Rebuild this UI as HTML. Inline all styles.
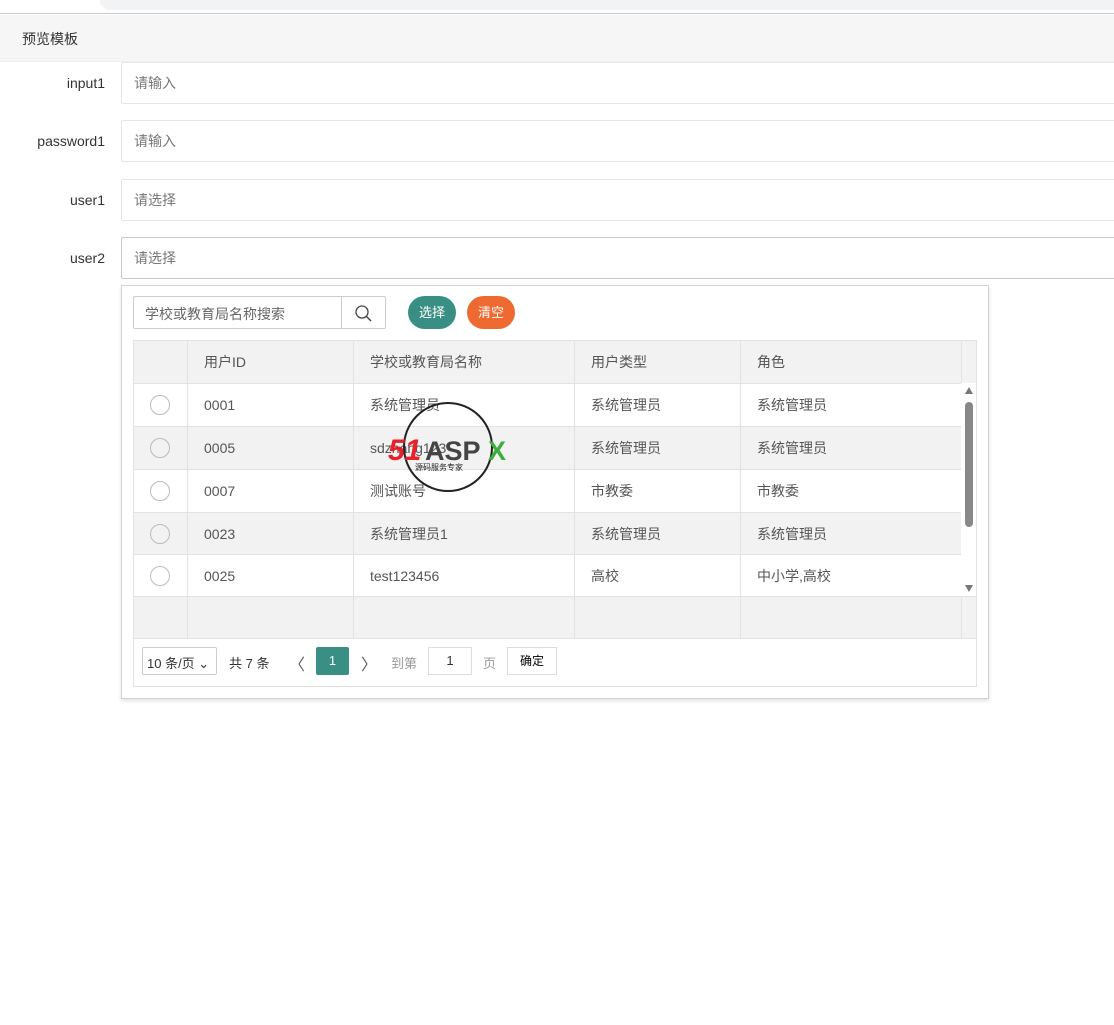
<!DOCTYPE html>
<html><head><meta charset="utf-8"><style>
*{box-sizing:border-box;margin:0;padding:0}
body{width:1114px;height:1025px;background:#fff;font-family:"Liberation Sans","Noto Sans CJK SC",sans-serif;font-size:14px;color:#333;position:relative;overflow:hidden}
.abs{position:absolute}
.chrome{left:0;top:0;width:1114px;height:14px;background:#fff;border-bottom:1px solid #ccc}
.addr{left:100px;top:-10px;width:1030px;height:20px;border-radius:10px;background:#f1f3f4}
.hdr{left:0;top:15px;width:1114px;height:47px;background:#f6f6f6;border-bottom:1px solid #eee;padding:14px 22px;font-size:14px;color:#333}
.lbl{width:105px;text-align:right;color:#333;font-size:14px}
.inp{left:121px;width:1000px;height:42px;border:1px solid #e6e6e6;border-radius:2px;padding:10px 12px;color:#777;font-size:14px}
.pop{left:121px;top:285px;width:868px;height:414px;border:1px solid #d2d2d2;box-shadow:0 2px 4px rgba(0,0,0,.12);background:#fff}
.srch{left:133px;top:296px;width:209px;height:33px;border:1px solid #ccc;border-radius:2px 0 0 2px;padding:7px 11px;color:#666}
.sbtn{left:341px;top:296px;width:45px;height:33px;border:1px solid #ccc;border-radius:0 2px 2px 0}
.btn{top:296px;height:33px;border-radius:17px;color:#fff;text-align:center;line-height:33px;font-size:13px}
table{position:absolute;left:133px;top:340px;border-collapse:collapse;width:844px}
td{border:1px solid #e2e2e2;height:42px;padding:0 16px;color:#555;font-size:14px}
tr.h td,tr.g td{background:#f2f2f2}
.rad{display:inline-block;width:20px;height:20px;border:1px solid #bbb;border-radius:50%;margin-left:0;vertical-align:middle}
.foot{left:133px;top:638px;width:844px;height:49px;border:1px solid #e2e2e2;border-top:none}
.sb{left:961px;top:383px;width:15px;height:213px;background:#fff}
</style></head><body>
<div class="abs chrome"></div><div class="abs addr"></div>
<div class="abs hdr">预览模板</div>
<div class="abs lbl" style="left:0;top:75px">input1</div>
<div class="abs inp" style="top:62px">请输入</div>
<div class="abs lbl" style="left:0;top:133px">password1</div>
<div class="abs inp" style="top:120px">请输入</div>
<div class="abs lbl" style="left:0;top:192px">user1</div>
<div class="abs inp" style="top:179px">请选择</div>
<div class="abs lbl" style="left:0;top:250px">user2</div>
<div class="abs inp" style="top:237px;border-color:#c9c9c9">请选择</div>
<div class="abs pop"></div>
<div class="abs srch">学校或教育局名称搜索</div>
<div class="abs sbtn"><svg width="45" height="33"><circle cx="20" cy="15" r="6" fill="none" stroke="#444" stroke-width="1.3"/><line x1="24.5" y1="19.5" x2="29" y2="24" stroke="#444" stroke-width="1.5"/></svg></div>
<div class="abs btn" style="left:408px;width:48px;background:#3a8f85">选择</div>
<div class="abs btn" style="left:467px;width:48px;background:#ee6a30">清空</div>
<table>
<tr class="h"><td style="width:54px;height:43px"></td><td style="width:166px">用户ID</td><td style="width:221px">学校或教育局名称</td><td style="width:166px">用户类型</td><td style="width:221px">角色</td><td style="width:15px;padding:0"></td></tr>
<tr><td style="height:43px"><span class="rad"></span></td><td>0001</td><td>系统管理员</td><td>系统管理员</td><td>系统管理员</td><td style="padding:0"></td></tr>
<tr class="g"><td style="height:43px"><span class="rad"></span></td><td>0005</td><td>sdzhang123</td><td>系统管理员</td><td>系统管理员</td><td style="padding:0"></td></tr>
<tr><td style="height:43px"><span class="rad"></span></td><td>0007</td><td>测试账号</td><td>市教委</td><td>市教委</td><td style="padding:0"></td></tr>
<tr class="g"><td><span class="rad"></span></td><td>0023</td><td>系统管理员1</td><td>系统管理员</td><td>系统管理员</td><td style="padding:0"></td></tr>
<tr><td><span class="rad"></span></td><td>0025</td><td>test123456</td><td>高校</td><td>中小学,高校</td><td style="padding:0"></td></tr>
<tr class="g"><td></td><td></td><td></td><td></td><td></td><td style="padding:0"></td></tr>
</table>
<div class="abs sb"><div class="abs" style="left:4px;top:4px;width:0;height:0;border-left:4px solid transparent;border-right:4px solid transparent;border-bottom:7px solid #777"></div><div class="abs" style="left:4px;top:19px;width:8px;height:125px;background:#888;border-radius:4px"></div><div class="abs" style="left:4px;top:202px;width:0;height:0;border-left:4px solid transparent;border-right:4px solid transparent;border-top:7px solid #777"></div></div>
<div class="abs foot"></div>
<div class="abs" style="left:142px;top:647px;width:75px;height:28px;border:1px solid #ccc;border-radius:2px;font-size:13px;padding:5px 4px;color:#333">10 条/页 ⌄</div>
<div class="abs" style="left:229px;top:653px;font-size:13px;color:#333">共 7 条</div>
<div class="abs" style="left:289px;top:651px;font-size:16px;color:#555">〈</div>
<div class="abs" style="left:316px;top:647px;width:33px;height:28px;background:#3a8f85;color:#fff;text-align:center;line-height:28px;font-size:13px;border-radius:2px">1</div>
<div class="abs" style="left:361px;top:651px;font-size:16px;color:#555">〉</div>
<div class="abs" style="left:391px;top:653px;font-size:13px;color:#999">到第</div>
<div class="abs" style="left:428px;top:647px;width:44px;height:28px;border:1px solid #ddd;text-align:center;line-height:26px;font-size:13px">1</div>
<div class="abs" style="left:483px;top:653px;font-size:13px;color:#999">页</div>
<div class="abs" style="left:507px;top:647px;width:50px;height:28px;border:1px solid #ddd;text-align:center;line-height:26px;font-size:12px;color:#000">确定</div>
<svg class="abs" style="left:385px;top:400px" width="130" height="95"><circle cx="63" cy="47" r="44" fill="none" stroke="#222" stroke-width="2"/><text x="3" y="60" font-family="Liberation Sans" font-weight="bold" font-style="italic" font-size="30" fill="#e8202a">51</text><text x="40" y="60" font-family="Liberation Sans" font-weight="bold" font-size="27" fill="#444">ASP</text><text x="103" y="60" font-family="Liberation Sans" font-weight="bold" font-size="27" fill="#3cae3a">X</text><text x="30" y="70" font-size="8" fill="#222" font-family="Noto Sans CJK SC">源码服务专家</text></svg>
</body></html>
